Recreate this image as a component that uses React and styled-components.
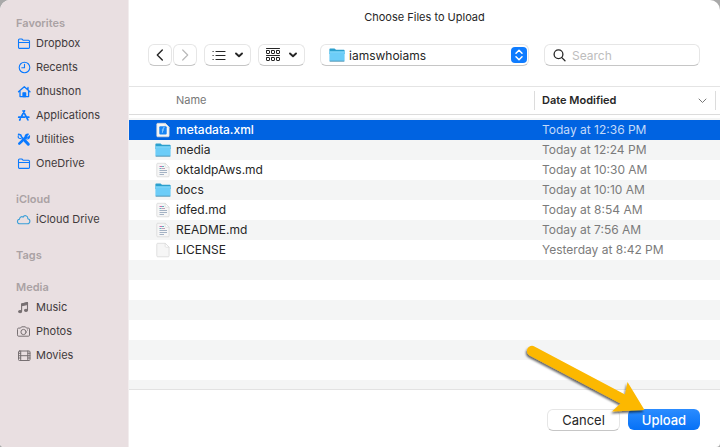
import React from "react";
import styled, { createGlobalStyle, css } from "styled-components";

const GlobalStyle = createGlobalStyle`
  *, *::before, *::after { box-sizing: border-box; }
  body {
    margin: 0;
    background: #a9a9a9;
    font-family: Inter, "Liberation Sans", sans-serif;
    color: #262626;
    overflow: hidden;
  }
  button, input, select { font: inherit; color: inherit; margin: 0; }
`;

const Dialog = styled.div`
  display: flex;
  height: 100vh;
  background: #fff;
  border-radius: 10px 10px 4px 4px;
  overflow: hidden;
  position: relative;
`;

const Sidebar = styled.nav`
  flex: none;
  width: 129px;
  padding: 15px 0 0 16px;
  display: flex;
  flex-direction: column;
  gap: 16px;
  background: #e9dfe1;
  border-right: 1px solid #f2edee;
`;

const SectionTitle = styled.h2`
  margin: 0;
  font-size: 11px;
  line-height: 16px;
  font-weight: 600;
  color: #aaa2a4;
`;

const PlaceList = styled.ul`
  margin: 0;
  padding: 0;
  list-style: none;
`;

const PlaceLink = styled.a`
  display: flex;
  align-items: center;
  gap: 5px;
  height: 24px;
  font-size: 11px;
  color: #3f3a3c;
  text-decoration: none;
  white-space: nowrap;

  svg {
    flex: none;
    color: ${(p) => p.$tint};
  }
`;

const Main = styled.main`
  flex: 1;
  min-width: 0;
  display: flex;
  flex-direction: column;
`;

const Title = styled.h1`
  margin: 0;
  padding-top: 9px;
  font-size: 11px;
  line-height: 16px;
  font-weight: 400;
  text-align: center;
`;

const Toolbar = styled.div`
  display: flex;
  gap: 7px;
  padding: 19px 20px 20px 19px;
  border-bottom: 1px solid #e4e4e4;
`;

const ButtonPair = styled.div`
  display: flex;
  gap: 1px;
`;

const raised = css`
  height: 22px;
  border: 1px solid #e6e6e6;
  border-bottom-color: #c6c6c6;
  border-radius: 6px;
  background: #fff;
`;

const ToolButton = styled.button`
  ${raised}
  display: flex;
  align-items: center;
  justify-content: center;
  width: ${(p) => (p.$wide ? 47 : 24)}px;
  gap: 9px;
  padding: 0;

  &:disabled { color: #b9b9b9; }
`;

const FolderPicker = styled.div`
  position: relative;
  flex: 1;
  height: 22px;
  margin: 0 8px;

  svg {
    position: absolute;
    top: 3px;
    pointer-events: none;
  }
  svg:first-of-type { left: 9px; }
  svg:last-of-type { right: 2px; }
`;

const FolderSelect = styled.select`
  ${raised}
  display: block;
  appearance: none;
  width: 100%;
  padding: 0 24px 0 28px;
  font-size: 12px;
`;

const SearchBox = styled.label`
  ${raised}
  flex: none;
  display: flex;
  align-items: center;
  gap: 6px;
  width: 156px;
  padding: 0 8px;
`;

const SearchInput = styled.input`
  flex: 1;
  min-width: 0;
  border: 0;
  padding: 0;
  outline: 0;
  background: none;
  font-size: 12px;

  &::placeholder { color: #bdbdbd; opacity: 1; }
`;

const FileArea = styled.div`
  flex: 1;
  min-height: 0;
  overflow: hidden;
  border-bottom: 1px solid #e2e2e2;
  background: repeating-linear-gradient(#fff 0 20px, #f4f5f5 20px 40px) 0 33px;
`;

const FileTable = styled.table`
  width: 100%;
  table-layout: fixed;
  border-collapse: separate;
  border-spacing: 0;

  tbody::before {
    content: "";
    display: block;
    height: 5px;
  }
`;

const HeadCell = styled.th`
  width: ${(p) => p.$width || "auto"};
  height: 28px;
  padding: ${(p) => (p.$sorted ? "4px 4px 4px 0" : "4px 0 4px 47px")};
  border-bottom: 1px solid #dcdcdc;
  background: #fff;
  font-size: 11px;
  line-height: 19px;
  font-weight: 400;
  text-align: left;
  color: #777;
`;

const SortButton = styled.button`
  display: flex;
  align-items: center;
  justify-content: space-between;
  width: 100%;
  height: 19px;
  padding: 0 8px 0 7px;
  border: solid #dcdcdc;
  border-width: 0 1px;
  background: none;
  font-weight: 600;
  color: #262626;

  svg { color: #777; }
`;

const FileRow = styled.tr`
  background: ${(p) => (p.$selected ? "#0063e1" : "transparent")};
  color: ${(p) => (p.$selected ? "#fff" : "#262626")};
  font-weight: ${(p) => (p.$selected ? 500 : 400)};
`;

const NameCell = styled.td`
  height: 20px;
  padding: 0 0 0 26px;
  font-size: 12px;
  line-height: 20px;
`;

const FileName = styled.span`
  display: flex;
  align-items: center;
  gap: 5px;
`;

const DateCell = styled.td`
  height: 20px;
  padding: 0 0 0 8px;
  font-size: 12px;
  line-height: 20px;
  font-weight: 400;
  color: ${(p) => (p.$selected ? "#c3dafa" : "#7b7b7b")};
`;

const Footer = styled.footer`
  position: relative;
  display: flex;
  justify-content: flex-end;
  gap: 8px;
  padding: 19px 20px 16px;
`;

const ActionButton = styled.button`
  ${raised}
  width: 73px;
  padding: 0;
  font-size: 13px;
  line-height: 18px;

  ${(p) =>
    p.$primary &&
    css`
      width: 72px;
      height: 21px;
      border: 0;
      background: linear-gradient(#2b8cff, #0671f6);
      color: #fff;
      font-weight: 500;
    `}
`;

const Pointer = styled.svg`
  position: absolute;
  right: 0;
  bottom: 0;
  pointer-events: none;
`;

const Glyph = ({ children, w = 15, h = 15, sw = 1.1 }) => (
  <svg width={w} height={h} viewBox={`0 0 ${w} ${h}`} fill="none" stroke="currentColor"
    strokeWidth={sw} strokeLinecap="round" strokeLinejoin="round" aria-hidden="true">
    {children}
  </svg>
);

const FolderLine = () => (
  <Glyph>
    <path d="M2.5 11.5V4Q2.5 3 3.5 3H5.8L7 4.2H12.5Q13.5 4.2 13.5 5.2V11.5Q13.5 12.4 12.6 12.4H3.4Q2.5 12.4 2.5 11.5ZM2.5 6.5H13.5" />
  </Glyph>
);
const Clock = () => (
  <Glyph>
    <circle cx="8.5" cy="7.5" r="5.3" />
    <path d="M8.5 4.3V7.8H5.8" />
  </Glyph>
);
const House = () => (
  <Glyph sw={1.3}>
    <path d="M2.5 7.8L8.3 2.8L14 7.8M4 7V12.6H12.6V7M12 3.5V5.5" />
    <path d="M7 12.5V8.8H9.6V12.5Z" fill="currentColor" />
  </Glyph>
);
const AppStore = () => (
  <Glyph sw={1.7}>
    <path d="M7.1 2.8L11.9 11.9M8.5 2.8L5.2 9M4.3 10.8L3.7 12M2.7 9.2H8.6M11 9.2H12.8" />
  </Glyph>
);
const Tools = () => (
  <Glyph>
    <path d="M2.6 2.3L4.8 3L5.4 4.8L11.9 11.5" strokeWidth="1.6" />
    <path d="M9.2 9L12.3 12.2" strokeWidth="3" />
    <path d="M3.3 11.6L9.9 5.2" strokeWidth="2.6" />
    <path d="M12.3 2.2L10.5 4L11.1 5.1L12.3 5.4L13.5 3.8Q13.8 6.8 11 7L9.4 6.6M12.3 2.2Q9.2 2 9.2 4.8" strokeWidth="1.2" />
    <path d="M2.3 3.8Q1.6 5.2 3.1 6.2L5.3 6.8" strokeWidth="1.1" />
  </Glyph>
);
const Cloud = () => (
  <Glyph>
    <path d="M4 11.8C.8 11.8.6 7.8 3.5 7.3C3.4 5 5.8 4 7.1 5.2C8.1 2.7 12 3.4 11.9 6.8C14.7 7.3 14.5 11.8 11.4 11.8Z" />
  </Glyph>
);
const Music = () => (
  <Glyph>
    <path d="M5.6 11V4L11.5 2.6V9.7" />
    <path d="M5.6 4L11.5 2.6V4.5L5.6 5.8Z" fill="currentColor" />
    <ellipse cx="4.1" cy="11.6" rx="1.5" ry="1.1" fill="currentColor" />
    <ellipse cx="10" cy="10.3" rx="1.5" ry="1.1" fill="currentColor" />
  </Glyph>
);
const Camera = () => (
  <Glyph sw={1}>
    <path d="M1.5 5.1Q1.5 4.1 2.5 4.1H4.5L5.6 2.8H9.4L10.5 4.1H12.5Q13.5 4.1 13.5 5.1V11.2Q13.5 12.2 12.5 12.2H2.5Q1.5 12.2 1.5 11.2Z" />
    <circle cx="7.5" cy="8" r="2.6" />
    <path d="M11.5 6H11.6" />
  </Glyph>
);
const Film = () => (
  <Glyph sw={1}>
    <rect x="2.5" y="3" width="11.5" height="9.5" rx="1" />
    <path d="M4.7 3V12.5M11.8 3V12.5M4.7 7.7H11.8M2.5 5.3H4.7M2.5 7.7H4.7M2.5 10H4.7M11.8 5.3H14M11.8 7.7H14M11.8 10H14" />
  </Glyph>
);

const Back = () => <Glyph w={8} h={12} sw={1.4}><path d="M6.3 1L1.3 6L6.3 11" /></Glyph>;
const Forward = () => <Glyph w={8} h={12} sw={1.2}><path d="M1.7 1L6.7 6L1.7 11" /></Glyph>;
const Chevron = () => <Glyph w={8} h={6} sw={1.9}><path d="M1 1.5L4 4.3L7 1.5" /></Glyph>;
const ThinChevron = () => <Glyph w={9} h={6} sw={1}><path d="M1 1L4.5 4.5L8 1" /></Glyph>;
const ListIcon = () => (
  <Glyph w={14} h={11} sw={1.2}>
    <path d="M4 1.5H13M4 5.5H13M4 9.5H13M1 1.5H1.2M1 5.5H1.2M1 9.5H1.2" />
  </Glyph>
);
const GroupIcon = () => (
  <Glyph w={14} h={14} sw={1}>
    <path d="M0.5 0.5H13.5M0.5 7.5H13.5" />
    {[3, 10].map((y) => [0.5, 5.5, 10.5].map((x) => (
      <rect key={`${x}-${y}`} x={x} y={y - 0.5} width="3" height="3" rx=".4" />
    )))}
  </Glyph>
);
const Magnifier = () => (
  <Glyph w={13} h={13} sw={1.3}>
    <circle cx="5.5" cy="5.3" r="4.4" />
    <path d="M8.8 8.6L12 11.8" />
  </Glyph>
);
const Stepper = () => (
  <svg width="16" height="16" viewBox="0 0 16 16" aria-hidden="true">
    <rect width="16" height="16" rx="4" fill="#0f7cff" />
    <path d="M5 6.2L8 3.3L11 6.2M5 9.8L8 12.7L11 9.8" fill="none" stroke="#fff" strokeWidth="1.5"
      strokeLinecap="round" strokeLinejoin="round" />
  </svg>
);

const Folder = () => (
  <svg width="16" height="16" viewBox="0 0 16 16" aria-hidden="true">
    <path d="M.4 2.2Q.4 1.4 1.2 1.4H5.5L7 2.7H14.8Q15.6 2.7 15.6 3.5V7H.4Z" fill="#2b9fcd" />
    <path d="M.4 4.6H15.6V13.4Q15.6 14.3 14.7 14.3H1.3Q.4 14.3.4 13.4Z" fill="#6ccdf8" />
    <path d="M.4 4.9H15.6" stroke="#93dffc" strokeWidth=".8" />
    <path d="M.7 14.2H15.3" stroke="#4588a6" strokeWidth=".8" />
  </svg>
);

const Page = ({ children }) => (
  <svg width="16" height="16" viewBox="0 0 16 16" aria-hidden="true">
    <path d="M2.7 1.3H10.2L14.1 5.2V13.9Q14.1 14.8 13.2 14.8H2.7Q1.8 14.8 1.8 13.9V2.2Q1.8 1.3 2.7 1.3Z"
      fill="#f6f6f6" stroke="#d5d5d5" strokeWidth=".7" />
    <path d="M10.2 1.3V4.4Q10.2 5.2 11 5.2H14.1Z" fill="#fff" stroke="#d5d5d5" strokeWidth=".6" />
    {children}
  </svg>
);

const fileIcons = {
  folder: <Folder />,
  blank: <Page />,
  markdown: (
    <Page>
      <path d="M4.5 4.5H7" stroke="#c66fae" />
      <path d="M7 4.5H9M4.5 6.5H6.5" stroke="#62b3bd" />
      <path d="M6.5 6.5H10" stroke="#c0a0b8" />
      <path d="M4.5 8.5H12M4.5 10.5H12M4.5 12.5H9" stroke="#a3b2c4" />
    </Page>
  ),
  xml: (
    <Page>
      <rect x="4.3" y="4.2" width="7.4" height="8.2" rx="1" fill="#1683f4" />
      <path d="M9.6 5.7H8.4L7.3 10.8M6.8 8H8.8" fill="none" stroke="#8bcbff" />
    </Page>
  ),
};

const BLUE = "#0a7aff";
const GRAY = "#777072";

const sections = [
  {
    title: "Favorites",
    tint: BLUE,
    places: [
      ["Dropbox", FolderLine],
      ["Recents", Clock],
      ["dhushon", House],
      ["Applications", AppStore],
      ["Utilities", Tools],
      ["OneDrive", FolderLine],
    ],
  },
  { title: "iCloud", tint: "#3a9fd8", places: [["iCloud Drive", Cloud]] },
  { title: "Tags", tint: GRAY, places: [] },
  {
    title: "Media",
    tint: GRAY,
    places: [["Music", Music], ["Photos", Camera], ["Movies", Film]],
  },
];

const files = [
  ["metadata.xml", "xml", "Today at 12:36 PM"],
  ["media", "folder", "Today at 12:24 PM"],
  ["oktaIdpAws.md", "markdown", "Today at 10:30 AM"],
  ["docs", "folder", "Today at 10:10 AM"],
  ["idfed.md", "markdown", "Today at 8:54 AM"],
  ["README.md", "markdown", "Today at 7:56 AM"],
  ["LICENSE", "blank", "Yesterday at 8:42 PM"],
];

export default function App() {
  return (
    <>
      <GlobalStyle />
      <Dialog role="dialog" aria-labelledby="dialog-title">
        <Sidebar aria-label="Places">
          {sections.map(({ title, tint, places }) => (
            <section key={title}>
              <SectionTitle>{title}</SectionTitle>
              {places.length > 0 && (
                <PlaceList>
                  {places.map(([name, Icon]) => (
                    <li key={name}>
                      <PlaceLink href="#" $tint={tint}>
                        <Icon />
                        {name}
                      </PlaceLink>
                    </li>
                  ))}
                </PlaceList>
              )}
            </section>
          ))}
        </Sidebar>

        <Main>
          <Title id="dialog-title">Choose Files to Upload</Title>
          <Toolbar>
            <ButtonPair>
              <ToolButton type="button" aria-label="Back"><Back /></ToolButton>
              <ToolButton type="button" aria-label="Forward" disabled><Forward /></ToolButton>
            </ButtonPair>
            <ToolButton type="button" $wide aria-label="View as list"><ListIcon /><Chevron /></ToolButton>
            <ToolButton type="button" $wide aria-label="Group items"><GroupIcon /><Chevron /></ToolButton>
            <FolderPicker>
              <FolderSelect aria-label="Current folder" defaultValue="iamswhoiams">
                <option>iamswhoiams</option>
              </FolderSelect>
              <Folder />
              <Stepper />
            </FolderPicker>
            <SearchBox>
              <Magnifier />
              <SearchInput type="text" placeholder="Search" aria-label="Search" />
            </SearchBox>
          </Toolbar>

          <FileArea>
            <FileTable>
              <thead>
                <tr>
                  <HeadCell scope="col">Name</HeadCell>
                  <HeadCell scope="col" $width="186px" $sorted aria-sort="descending">
                    <SortButton type="button">Date Modified<ThinChevron /></SortButton>
                  </HeadCell>
                </tr>
              </thead>
              <tbody>
                {files.map(([name, kind, date], i) => (
                  <FileRow key={name} $selected={i === 0}>
                    <NameCell>
                      <FileName>{fileIcons[kind]}{name}</FileName>
                    </NameCell>
                    <DateCell $selected={i === 0}>{date}</DateCell>
                  </FileRow>
                ))}
              </tbody>
            </FileTable>
          </FileArea>

          <Footer>
            <ActionButton type="button">Cancel</ActionButton>
            <ActionButton type="button" $primary>Upload</ActionButton>
            <Pointer width="210" height="117" viewBox="0 0 210 117" aria-hidden="true">
              <defs>
                <filter id="arrow-shadow" x="-10%" y="-10%" width="120%" height="130%">
                  <feDropShadow dx="-1" dy="2" stdDeviation="1.2" floodColor="#000" floodOpacity=".6" />
                </filter>
              </defs>
              <path d="M24.4 16.4L115 64.5L117.5 52L134.5 80L102 81.5L110.5 73.5L19.6 25.4A5 5 0 0 1 24.4 16.4Z"
                fill="#fcb803" filter="url(#arrow-shadow)" />
            </Pointer>
          </Footer>
        </Main>
      </Dialog>
    </>
  );
}
